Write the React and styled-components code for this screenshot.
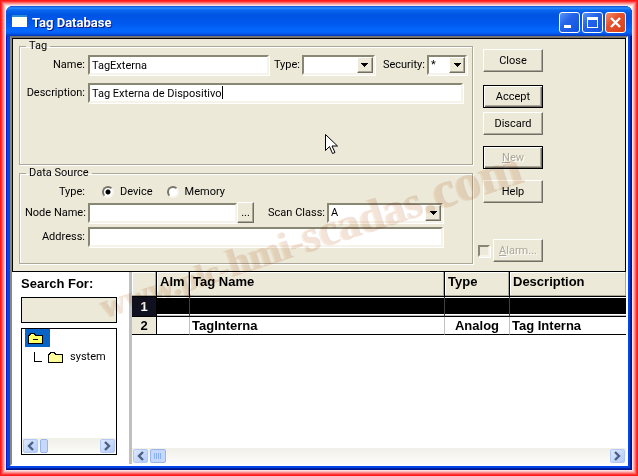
import React from "react";
import styled, { createGlobalStyle } from "styled-components";

const GlobalStyle = createGlobalStyle`
  *, *::before, *::after { box-sizing: border-box; }
  body { margin: 0; font-family: Roboto, "Liberation Sans", sans-serif; font-size: 11px; line-height: 16px; }
  input, button, select { font: inherit; color: inherit; margin: 0; border-radius: 0; }
`;

const tags = [
  { id: 1, name: "", type: "", description: "" },
  { id: 2, name: "TagInterna", type: "Analog", description: "Tag Interna" }
];

// the lettering grows towards the right
const watermark = [
  { text: "www.", size: 35 },
  { text: "plc-", size: 32 },
  { text: "hmi-", size: 39 },
  { text: "scadas", size: 45 },
  { text: ".com", size: 52 }
];

function ChevronIcon({ flip }) {
  return (
    <svg width="7" height="10" viewBox="0 0 7 10">
      <path
        d={flip ? "M1 1l4 4-4 4" : "M6 1L2 5l4 4"}
        fill="none"
        stroke="#4d6185"
        strokeWidth="2.4"
      />
    </svg>
  );
}

function FolderIcon({ open, fill }) {
  return (
    <svg width="16" height="13" viewBox="0 0 16 13" shapeRendering="crispEdges">
      <path
        d="M.5 11.500v-8h1v-1h1v-1h4v1h1v1h6.500v8z"
        fill={fill}
        stroke="#000"
      />
      {open && <path d="M5 7.500h5" stroke="#000" />}
    </svg>
  );
}

function Select({ id, width, children }) {
  return (
    <SelectFrame $width={width}>
      <SelectInput id={id}>{children}</SelectInput>
      <SelectArrow aria-hidden="true">
        <svg width="7" height="4" viewBox="0 0 7 4" shapeRendering="crispEdges">
          <path d="M0 0h7v1h-1v1h-1v1h-1v1h-1v-1h-1v-1h-1v-1h-1z" />
        </svg>
      </SelectArrow>
    </SelectFrame>
  );
}

function ScrollBar({ thumb, grip }) {
  return (
    <ScrollTrack>
      <ScrollButton aria-label="Scroll left">
        <ChevronIcon />
      </ScrollButton>
      <ScrollThumb $width={thumb}>
        {grip && (
          <svg width="8" height="6" shapeRendering="crispEdges">
            <path d="M.5 0v6M2.500 0v6M4.500 0v6M6.500 0v6" stroke="#8cb0f8" />
          </svg>
        )}
      </ScrollThumb>
      <ScrollSpace />
      <ScrollButton aria-label="Scroll right">
        <ChevronIcon flip />
      </ScrollButton>
    </ScrollTrack>
  );
}

function App() {
  return (
    <Glow>
      <GlobalStyle />
      <Window>
        <TitleBar>
          <AppIcon />
          <Title>Tag Database</Title>
          <CaptionButton aria-label="Minimize">
            <svg width="19" height="19">
              <path d="M4 13.500h7" stroke="#fff" strokeWidth="3" />
            </svg>
          </CaptionButton>
          <CaptionButton aria-label="Maximize">
            <svg width="19" height="19" shapeRendering="crispEdges">
              <path d="M4.500 5v9.500h10v-9.500" fill="none" stroke="#fff" />
              <path d="M4 5.500h11" stroke="#fff" strokeWidth="3" />
            </svg>
          </CaptionButton>
          <CaptionButton $danger aria-label="Close window">
            <svg width="19" height="19">
              <path d="M5 5l9 9M14 5l-9 9" stroke="#fff" strokeWidth="2.400" />
            </svg>
          </CaptionButton>
        </TitleBar>

        <Client>
          <FormPanel>
            <Groups>
              <Group $height={120}>
                <Legend>Tag</Legend>
                <Row $top={8}>
                  <Label htmlFor="name">Name:</Label>
                  <TextInput id="name" defaultValue="TagExterna" />
                  <InlineLabel htmlFor="type" $gap={5}>
                    Type:
                  </InlineLabel>
                  <Select id="type" width={73}>
                    <option></option>
                  </Select>
                  <InlineLabel htmlFor="security" $gap={8}>
                    Security:
                  </InlineLabel>
                  <Select id="security" width={40}>
                    <option>*</option>
                  </Select>
                </Row>
                <Row $top={8}>
                  <Label htmlFor="description">Description:</Label>
                  <CaretField>
                    <TextInput
                      id="description"
                      defaultValue="Tag Externa de Dispositivo"
                    />
                    <Caret />
                  </CaretField>
                </Row>
              </Group>

              <Group $height={92}>
                <Legend>Data Source</Legend>
                <Row $top={8}>
                  <Label as="span">Type:</Label>
                  <RadioLabel>
                    <Radio name="source" defaultChecked />
                    Device
                  </RadioLabel>
                  <RadioLabel>
                    <Radio name="source" />
                    Memory
                  </RadioLabel>
                </Row>
                <Row $end={24}>
                  <Label htmlFor="node">Node Name:</Label>
                  <TextInput id="node" />
                  <BrowseButton>...</BrowseButton>
                  <InlineLabel htmlFor="scan" $gap={14}>
                    Scan Class:
                  </InlineLabel>
                  <Select id="scan" width={116}>
                    <option>A</option>
                  </Select>
                </Row>
                <Row $top={4} $end={24}>
                  <Label htmlFor="address">Address:</Label>
                  <TextInput id="address" />
                </Row>
              </Group>
            </Groups>

            <Actions>
              <Button>Close</Button>
              <ActionPair>
                <Button $primary>Accept</Button>
                <Button>Discard</Button>
              </ActionPair>
              <Button $primary disabled>
                <u>N</u>ew
              </Button>
              <Button>Help</Button>
              <AlarmRow>
                <CheckBox aria-label="Alarm" />
                <Button disabled>
                  <u>A</u>larm...
                </Button>
              </AlarmRow>
            </Actions>
          </FormPanel>

          <Browser>
            <Sidebar>
              <SearchLabel htmlFor="search">Search For:</SearchLabel>
              <SearchInput id="search" />
              <Tree>
                <TreeRoot aria-label="Root folder">
                  <FolderIcon open fill="#ffff66" />
                </TreeRoot>
                <TreeNode>
                  <svg width="8" height="10" shapeRendering="crispEdges">
                    <path d="M.5 0v9.500h7.500" fill="none" stroke="#000" />
                  </svg>
                  <FolderIcon fill="#ffff99" />
                  system
                </TreeNode>
                <ScrollSpace />
                <ScrollBar thumb={8} />
              </Tree>
            </Sidebar>
            <GridPane>
              <Table>
                <colgroup>
                  <col width="25" />
                  <col width="33" />
                  <col />
                  <col width="65" />
                  <col width="116" />
                </colgroup>
                <thead>
                  <tr>
                    <HeadCell />
                    <HeadCell>Alm</HeadCell>
                    <HeadCell>Tag Name</HeadCell>
                    <HeadCell>Type</HeadCell>
                    <HeadCell>Description</HeadCell>
                  </tr>
                </thead>
                <tbody>
                  {tags.map(tag => (
                    <TagRow key={tag.id} $selected={tag.id === 1}>
                      <RowHead $selected={tag.id === 1}>{tag.id}</RowHead>
                      <Cell />
                      <Cell>{tag.name}</Cell>
                      <Cell $center>{tag.type}</Cell>
                      <Cell>{tag.description}</Cell>
                    </TagRow>
                  ))}
                </tbody>
              </Table>
              <ScrollSpace />
              <ScrollBar thumb={16} grip />
            </GridPane>
          </Browser>
        </Client>
      </Window>
      <Watermark>
        {watermark.map(part => (
          <WatermarkPart key={part.text} $size={part.size}>
            {part.text}
          </WatermarkPart>
        ))}
      </Watermark>
      <Pointer width="13" height="21" viewBox="0 0 13 21">
        <path
          d="M.5 .5v16l4-4 3 7 2.500-1-3-6.500h5.500z"
          fill="#fff"
          stroke="#000"
        />
      </Pointer>
    </Glow>
  );
}

const sunken = `
  border: 2px solid;
  border-color: #8a8674 #f6f4ea #f6f4ea #8a8674;
  box-shadow: 1px 1px 0 #fff;
`;

const raised = `
  border: 1px solid;
  border-color: #fff #716f64 #716f64 #fff;
  box-shadow: inset -1px -1px 0 #aca899;
  background: #ece9d8;
`;

const Glow = styled.div`
  position: relative;
  display: flex;
  min-height: 100vh;
  padding: 6px;
  overflow: hidden;
  background: #fff;
  box-shadow: inset 0 0 0 1px #ff1a1a, inset 0 0 0 2px #ff3030,
    inset 0 0 0 3px #ff6464, inset 0 0 0 4px #ff9090, inset 0 0 0 5px #ffbcbc,
    inset 0 0 0 6px #ffe0e0;
`;

const Window = styled.div`
  flex: 1;
  display: flex;
  flex-direction: column;
  min-width: 0;
  padding: 0 4px 4px;
  border-radius: 7px 7px 0 0;
  background: #0144e8;
  box-shadow: inset -1px -1px 0 #00138c, inset -2px -2px 0 #001ea0,
    inset 1px 0 0 #0019cf;
`;

const TitleBar = styled.header`
  display: flex;
  align-items: center;
  gap: 2px;
  height: 30px;
  margin: 0 -4px;
  padding: 2px 6px 0;
  border-radius: 7px 7px 0 0;
  background: linear-gradient(
    #0a4fd0 0,
    #2a8fff 2px,
    #0a66f0 4px,
    #0054e3 9px,
    #0058ee 17px,
    #0468ff 25px,
    #0460f8 27px,
    #0038c0 30px
  );
`;

const AppIcon = styled.span`
  width: 15px;
  height: 12px;
  margin-bottom: 2px;
  border-top: 2px solid #2a8ad8;
  background: #fffff4;
`;

const Title = styled.h1`
  flex: 1;
  margin: 2px 0 0 3px;
  font: bold 13px/18px Roboto, sans-serif;
  color: #fff;
  text-shadow: 1px 1px 0 #0a1883;
`;

const CaptionButton = styled.button`
  display: flex;
  width: 21px;
  height: 21px;
  padding: 0;
  border: 1px solid #fff;
  border-radius: 3px;
  background: ${({ $danger }) =>
    $danger
      ? "linear-gradient(135deg, #f09070, #e5512c 40%, #d8421a)"
      : "linear-gradient(135deg, #5a94f8, #2563e8 40%, #0f52e0)"};
`;

const Client = styled.main`
  flex: 1;
  display: flex;
  flex-direction: column;
  border: 2px solid;
  border-color: #77736a #fff #fff #8c8878;
  background: #fff;
`;

const FormPanel = styled.section`
  display: flex;
  gap: 10px;
  padding: 6px 0 7px 6px;
  border: 1px solid #000;
  background: #ece9d8;
`;

const Groups = styled.div`
  flex: 1;
  display: flex;
  flex-direction: column;
  gap: 7px;
  min-width: 0;
`;

const Group = styled.fieldset`
  min-width: 0;
  min-height: ${({ $height }) => $height}px;
  margin: 0;
  padding: 0 5px;
  border: 1px solid #aca899;
  box-shadow: 1px 1px 0 #fff, inset 1px 1px 0 #fff;
`;

const Legend = styled.legend`
  height: 2px;
  margin-left: 1px;
  padding: 0 3px;
  line-height: 2px;
  background: #ece9d8;
`;

const Row = styled.div`
  display: flex;
  align-items: center;
  min-height: 20px;
  margin-top: ${({ $top }) => $top || 0}px;
  padding-right: ${({ $end }) => $end || 0}px;
`;

const Label = styled.label`
  flex: none;
  width: 63px;
  padding-right: 3px;
  text-align: right;
  white-space: nowrap;
`;

const InlineLabel = styled.label`
  padding: 0 2px 0 ${({ $gap }) => $gap}px;
  white-space: nowrap;
`;

const TextInput = styled.input`
  flex: 1;
  width: 100%;
  min-width: 0;
  height: 20px;
  padding: 0 2px;
  outline: none;
  background: #fff;
  ${sunken}
`;

const CaretField = styled.div`
  position: relative;
  flex: 1;
  display: flex;
  margin-right: 4px;
`;

const Caret = styled.span`
  position: absolute;
  top: 3px;
  left: 134px;
  width: 1px;
  height: 13px;
  background: #000;
`;

const SelectFrame = styled.div`
  position: relative;
  flex: none;
  display: flex;
  width: ${({ $width }) => $width}px;
  height: 20px;
  background: #fff;
  ${sunken}
`;

const SelectInput = styled.select`
  flex: 1;
  width: 100%;
  padding: 0 2px;
  border: 0;
  outline: none;
  appearance: none;
  background: transparent;
`;

const SelectArrow = styled.span`
  position: absolute;
  top: 0;
  right: 0;
  display: flex;
  align-items: center;
  justify-content: center;
  width: 16px;
  height: 16px;
  pointer-events: none;
  ${raised}
`;

const Radio = styled.input.attrs({ type: "radio" })`
  appearance: none;
  width: 12px;
  height: 12px;
  border: 2px solid;
  border-color: #77746a #f8f6ee #f8f6ee #77746a;
  border-radius: 50%;
  background: #fff;
  &:checked {
    background: radial-gradient(circle, #000 2px, #fff 3px);
  }
`;

const RadioLabel = styled.label`
  display: flex;
  align-items: center;
  gap: 6px;
  margin-left: 14px;
`;

const BrowseButton = styled.button`
  width: 17px;
  height: 21px;
  padding: 0;
  ${raised}
`;

const Actions = styled.div`
  display: flex;
  flex-direction: column;
  align-items: flex-end;
  gap: 11px;
  width: 142px;
  padding: 4px 82px 0 0;
`;

const ActionPair = styled.div`
  display: flex;
  flex-direction: column;
  gap: 4px;
  margin-top: 2px;
`;

const Button = styled.button`
  width: 60px;
  height: 23px;
  padding: 0;
  white-space: nowrap;
  ${raised}
  ${({ $primary }) =>
    $primary &&
    `border-color: #000;
     box-shadow: inset 1px 1px 0 #fff, inset -1px -1px 0 #716f64, inset -2px -2px 0 #aca899;`}
  &:disabled {
    color: #aca899;
    text-shadow: 1px 1px 0 #fff;
  }
`;

const AlarmRow = styled.div`
  display: flex;
  align-items: center;
  gap: 3px;
  margin-top: 25px;
  ${Button} {
    width: 50px;
  }
`;

const CheckBox = styled.input.attrs({ type: "checkbox" })`
  appearance: none;
  width: 12px;
  height: 12px;
  background: #ece9d8;
  ${sunken}
`;

const Browser = styled.section`
  flex: 1;
  display: flex;
`;

const Sidebar = styled.aside`
  display: flex;
  flex-direction: column;
  width: 120px;
  padding: 4px 12px 9px 9px;
  border-right: 3px solid #c0c0c0;
`;

const SearchLabel = styled.label`
  font: bold 13px/16px "Liberation Sans", sans-serif;
`;

const SearchInput = styled.input`
  width: 100%;
  height: 26px;
  margin-top: 5px;
  border: 1px solid #000;
  background: #ece9d8;
`;

const Tree = styled.div`
  flex: 1;
  display: flex;
  flex-direction: column;
  margin-top: 5px;
  border: 1px solid #000;
`;

const TreeRoot = styled.div`
  display: flex;
  align-items: center;
  width: 25px;
  height: 18px;
  margin-left: 3px;
  padding-left: 3px;
  background: #0a64c8;
`;

const TreeNode = styled.div`
  display: flex;
  align-items: center;
  gap: 6px;
  height: 20px;
  padding-left: 12px;
`;

const GridPane = styled.div`
  flex: 1;
  display: flex;
  flex-direction: column;
  min-width: 0;
`;

const Table = styled.table`
  width: 100%;
  table-layout: fixed;
  border-collapse: separate;
  border-spacing: 0;
  font: bold 13px/16px "Liberation Sans", sans-serif;
`;

const HeadCell = styled.th`
  height: 25px;
  padding: 0 2px 4px 3px;
  border-right: 1px solid #000;
  border-bottom: 1px solid #000;
  box-shadow: inset -1px -1px 0 #aca899, inset 1px 1px 0 #fff;
  background: #ece9d8;
  text-align: left;
  white-space: nowrap;
  &:last-child {
    border-right: 0;
  }
`;

const Cell = styled.td`
  height: 18px;
  padding: 0 2px;
  border-right: 1px solid #c0c0c0;
  border-bottom: 1px solid #000;
  text-align: ${({ $center }) => ($center ? "center" : "left")};
  &:last-child {
    border-right: 0;
  }
`;

const RowHead = styled.th`
  padding: 0;
  border-right: 1px solid #000;
  border-bottom: 1px solid #000;
  background: ${({ $selected }) => ($selected ? "#101020" : "#ece9d8")};
`;

const TagRow = styled.tr`
  ${({ $selected }) =>
    $selected &&
    `color: #fff;
     ${Cell} {
       height: 20px;
       border-color: #404040;
       border-bottom-color: #000;
       background: #000;
       box-shadow: inset 0 1px 0 #fff, inset 0 -1px 0 #c0c0c0, inset 0 -2px 0 #fff;
     }`}
`;

const ScrollTrack = styled.div`
  display: flex;
  gap: 2px;
  height: 16px;
  padding: 1px;
  background: linear-gradient(#f0efe8, #fdfdfa);
`;

const ScrollButton = styled.button`
  display: flex;
  align-items: center;
  justify-content: center;
  width: 15px;
  height: 14px;
  padding: 0;
  border: 1px solid #b4c8f6;
  background: linear-gradient(135deg, #dce8ff, #b4ccfb);
  border-radius: 2px;
`;

const ScrollThumb = styled.div`
  display: flex;
  align-items: center;
  justify-content: center;
  width: ${({ $width }) => $width}px;
  border: 1px solid #98b4ec;
  border-radius: 2px;
  background: #c6d8fd;
`;

const ScrollSpace = styled.div`
  flex: 1;
`;

const Watermark = styled.div`
  position: absolute;
  left: 109px;
  top: 271px;
  display: flex;
  align-items: baseline;
  transform: rotate(-18deg);
  transform-origin: 0 100%;
  font-family: "Liberation Serif", serif;
  font-weight: bold;
  line-height: 60px;
  color: rgba(246, 228, 212, 0.7);
  text-shadow: 2px 0 0 rgba(200, 160, 145, 0.3);
  white-space: nowrap;
  pointer-events: none;
  mix-blend-mode: multiply;
`;

const WatermarkPart = styled.span`
  font-size: ${({ $size }) => $size}px;
`;

const Pointer = styled.svg`
  position: absolute;
  left: 325px;
  top: 134px;
  pointer-events: none;
`;

export default App;
